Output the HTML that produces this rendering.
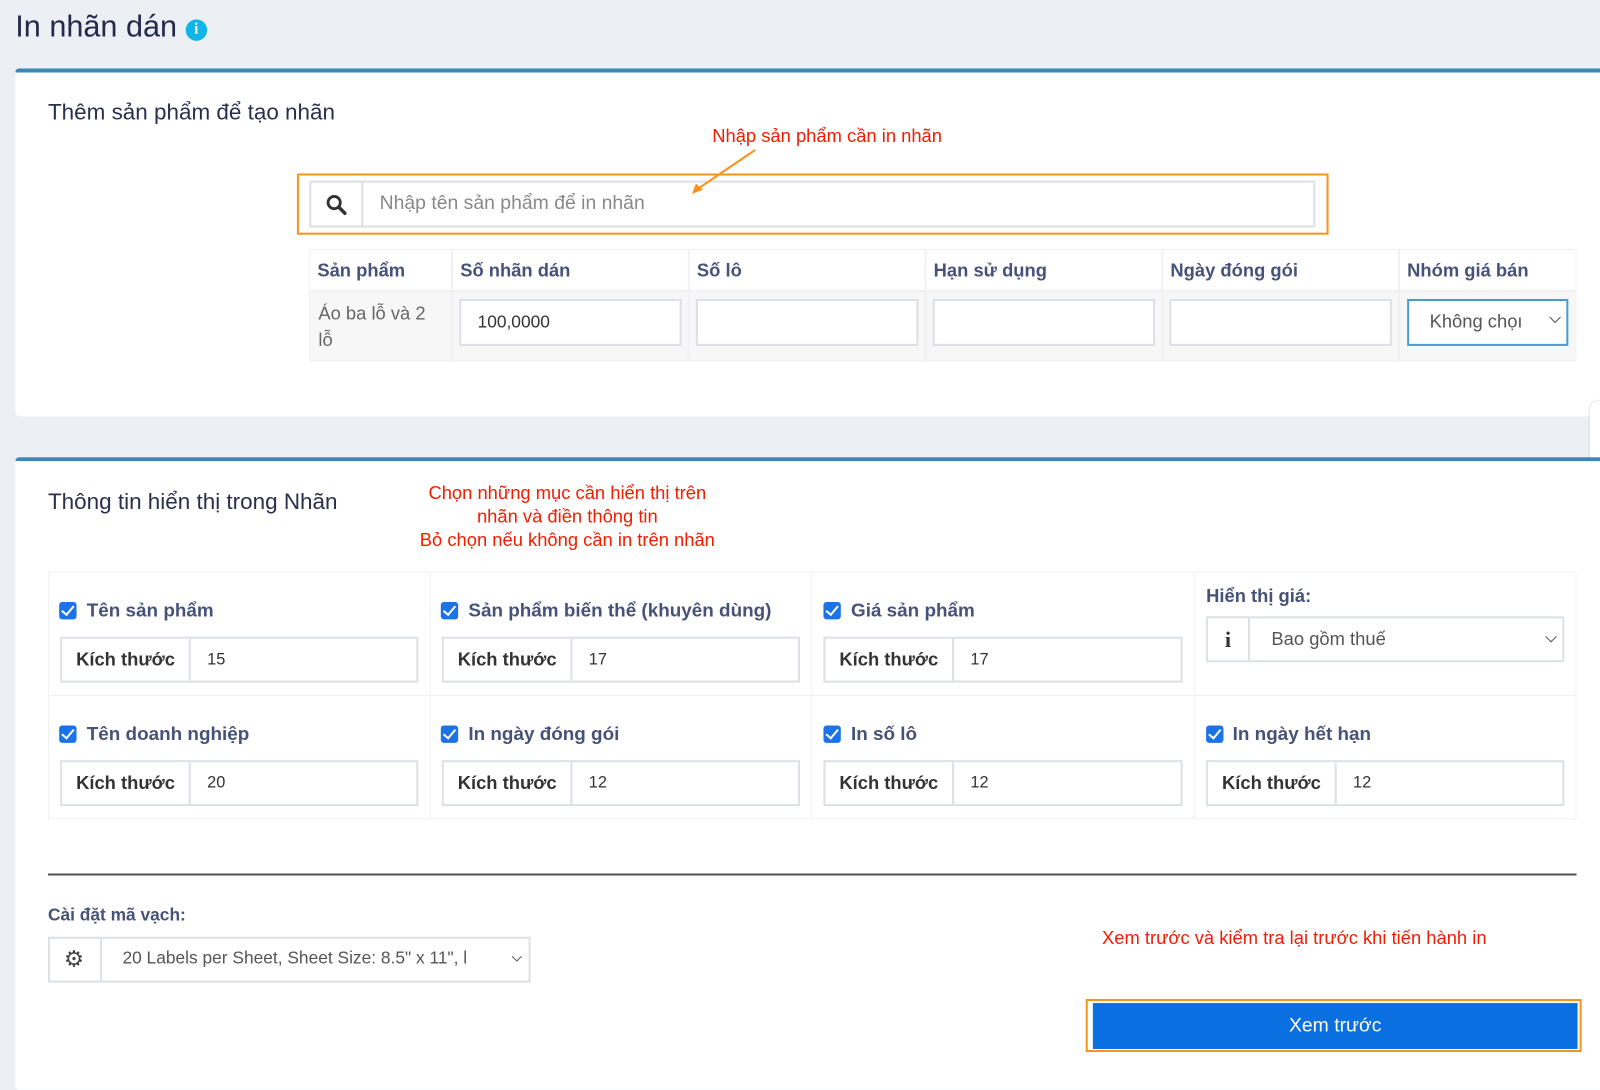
<!DOCTYPE html>
<html><head><meta charset="utf-8"><style>
*{box-sizing:border-box;margin:0;padding:0}
body{width:1600px;height:1060px;background:#eceff4;font-family:"Liberation Sans",sans-serif;overflow:hidden;color:#333}
#w{position:absolute;left:0;top:0;width:1568px;height:1040px;transform:scale(1.0204);transform-origin:0 0}
.a{position:absolute}
.card{position:absolute;background:#fff;border-top:4px solid #3a87b9;border-radius:4px 0 0 4px}
h1{position:absolute;left:15px;top:10px;font-size:30px;font-weight:normal;color:#252a4a}
.h2{font-size:22px;color:#2a2f4d}
.red{color:#f41c00;font-size:18px;text-align:center;line-height:23px}
.th{position:absolute;top:244px;height:41px;background:#fff;border:1px solid #f0f0f2;font-size:18px;font-weight:bold;color:#46527a;padding:10px 7px}
.td{position:absolute;top:285px;height:69px;background:#f7f7f8;border:1px solid #f0f0f2}
.inp{position:absolute;background:#fff;border:2px solid #dde0e6;font-size:17px;color:#333;padding:11px 16px}
.cell{position:absolute;border:1px solid #f0f1f3;background:#fff}
.chk{position:absolute;width:17px;height:17px;background:#1a73e8;border-radius:3px}
.chk:after{content:"";position:absolute;left:5px;top:1px;width:5px;height:10px;border:solid #fff;border-width:0 2.5px 2.5px 0;transform:rotate(40deg)}
.lbl{position:absolute;font-size:18.5px;font-weight:bold;color:#46527a}
.grp{position:absolute;height:45px;border:2px solid #dde0e6;background:#fff}
.grp .k{position:absolute;left:0;top:0;bottom:0;width:126px;border-right:2px solid #dde0e6;font-size:18px;font-weight:bold;color:#333;text-align:center;line-height:41px;background:#fff}
.grp .v{position:absolute;left:142px;top:12px;font-size:16px;color:#333}
</style></head><body><div id="w">
<h1>In nhãn dán <span style="display:inline-block;width:21px;height:21px;border-radius:50%;background:#12b5e8;color:#fff;font-size:15px;font-weight:bold;text-align:center;line-height:21px;vertical-align:3px;font-family:'Liberation Serif',serif">i</span></h1>

<div class="card" style="left:15px;top:67px;width:1585px;height:341px"></div>
<div class="a" style="left:1558px;top:393px;width:42px;height:60px;background:#fff;border-radius:8px 0 0 8px;box-shadow:0 0 2px #ccc"></div>
<div class="a h2" style="left:47px;top:97px">Thêm sản phẩm để tạo nhãn</div>
<div class="a red" style="left:698px;top:122px">Nhập sản phẩm cần in nhãn</div>

<div class="a" style="left:291px;top:170px;width:1011px;height:60px;border:2px solid #f7941d"></div>
<div class="a" style="left:303px;top:177px;width:986px;height:46px;border:2px solid #dde0e6;background:#fff"></div>
<div class="a" style="left:303px;top:177px;width:53px;height:46px;border-right:2px solid #dde0e6"></div>
<svg class="a" style="left:319px;top:190px" width="22" height="22" viewBox="0 0 22 22"><circle cx="8.5" cy="8.5" r="6" fill="none" stroke="#333" stroke-width="2.8"/><path d="M13 13l6 6" stroke="#333" stroke-width="3.4" stroke-linecap="round"/></svg>
<div class="a" style="left:372px;top:189px;font-size:19px;color:#888">Nhập tên sản phẩm để in nhãn</div>
<svg class="a" style="left:0;top:0" width="1600" height="1060"><g stroke="#f7941d" stroke-width="2" fill="#f7941d">
<line x1="740" y1="147" x2="684" y2="185"/><polygon points="678,190 682,180 689,186" stroke="none"/>
<line x1="426" y1="537" x2="88" y2="584"/><polygon points="80,585 90,579 91,588" stroke="none"/>
<line x1="428" y1="542" x2="264" y2="631"/><polygon points="257,635 264,627 268,634" stroke="none"/>
<line x1="1270" y1="928" x2="1244" y2="972"/><polygon points="1240,979 1241,968 1248,972" stroke="none"/>
</g></svg>

<div class="th" style="left:303px;width:140px">Sản phẩm</div>
<div class="th" style="left:443px;width:232px">Số nhãn dán</div>
<div class="th" style="left:675px;width:232px">Số lô</div>
<div class="th" style="left:907px;width:232px">Hạn sử dụng</div>
<div class="th" style="left:1139px;width:232px">Ngày đóng gói</div>
<div class="th" style="left:1371px;width:174px">Nhóm giá bán</div>
<div class="td" style="left:303px;width:140px;font-size:18px;color:#666;padding:8px 24px 8px 8px;line-height:26px">Áo ba lỗ và 2 lỗ</div>
<div class="td" style="left:443px;width:232px"></div>
<div class="td" style="left:675px;width:232px"></div>
<div class="td" style="left:907px;width:232px"></div>
<div class="td" style="left:1139px;width:232px"></div>
<div class="td" style="left:1371px;width:174px"></div>
<div class="inp" style="left:450px;top:293px;width:218px;height:46px">100,0000</div>
<div class="inp" style="left:682px;top:293px;width:218px;height:46px"></div>
<div class="inp" style="left:914px;top:293px;width:218px;height:46px"></div>
<div class="inp" style="left:1146px;top:293px;width:218px;height:46px"></div>
<div class="inp" style="left:1379px;top:293px;width:158px;height:46px;border-color:#4a9bd0;color:#555;padding:10px 20px;font-size:18px">Không chọı</div>
<div class="a" style="left:1520px;top:307px;width:8px;height:8px;border:solid #555;border-width:0 1.5px 1.5px 0;transform:rotate(45deg)"></div>

<div class="card" style="left:15px;top:448px;width:1585px;height:620px"></div>
<div class="a h2" style="left:47px;top:479px">Thông tin hiển thị trong Nhãn</div>
<div class="a red" style="left:400px;top:472px;width:312px">Chọn những mục cần hiển thị trên nhãn và điền thông tin<br>Bỏ chọn nếu không cần in trên nhãn</div>

<div class="cell" style="left:47px;top:560px;width:375px;height:122px"></div>
<div class="cell" style="left:421px;top:560px;width:375px;height:122px"></div>
<div class="cell" style="left:795px;top:560px;width:376px;height:122px"></div>
<div class="cell" style="left:1170px;top:560px;width:375px;height:122px"></div>
<div class="cell" style="left:47px;top:681px;width:375px;height:122px"></div>
<div class="cell" style="left:421px;top:681px;width:375px;height:122px"></div>
<div class="cell" style="left:795px;top:681px;width:376px;height:122px"></div>
<div class="cell" style="left:1170px;top:681px;width:375px;height:122px"></div>

<div class="chk" style="left:58px;top:590px"></div><div class="lbl" style="left:85px;top:587px">Tên sản phẩm</div>
<div class="chk" style="left:432px;top:590px"></div><div class="lbl" style="left:459px;top:587px">Sản phẩm biến thể (khuyên dùng)</div>
<div class="chk" style="left:807px;top:590px"></div><div class="lbl" style="left:834px;top:587px">Giá sản phẩm</div>
<div class="lbl" style="left:1182px;top:574px;font-size:18px">Hiển thị giá:</div>
<div class="chk" style="left:58px;top:711px"></div><div class="lbl" style="left:85px;top:708px">Tên doanh nghiệp</div>
<div class="chk" style="left:432px;top:711px"></div><div class="lbl" style="left:459px;top:708px">In ngày đóng gói</div>
<div class="chk" style="left:807px;top:711px"></div><div class="lbl" style="left:834px;top:708px">In số lô</div>
<div class="chk" style="left:1182px;top:711px"></div><div class="lbl" style="left:1208px;top:708px">In ngày hết hạn</div>

<div class="grp" style="left:59px;top:624px;width:351px"><div class="k">Kích thước</div><div class="v">15</div></div>
<div class="grp" style="left:433px;top:624px;width:351px"><div class="k">Kích thước</div><div class="v">17</div></div>
<div class="grp" style="left:807px;top:624px;width:352px"><div class="k">Kích thước</div><div class="v">17</div></div>
<div class="grp" style="left:59px;top:745px;width:351px"><div class="k">Kích thước</div><div class="v">20</div></div>
<div class="grp" style="left:433px;top:745px;width:351px"><div class="k">Kích thước</div><div class="v">12</div></div>
<div class="grp" style="left:807px;top:745px;width:352px"><div class="k">Kích thước</div><div class="v">12</div></div>
<div class="grp" style="left:1182px;top:745px;width:351px"><div class="k">Kích thước</div><div class="v">12</div></div>

<div class="grp" style="left:1182px;top:604px;width:351px"><div class="k" style="width:41px;font-family:'Liberation Serif',serif;font-size:22px">i</div><div class="v" style="left:62px;top:10px;font-size:18px;color:#555">Bao gồm thuế</div></div>
<div class="a" style="left:1516px;top:620px;width:8px;height:8px;border:solid #555;border-width:0 1.5px 1.5px 0;transform:rotate(45deg)"></div>

<div class="a" style="left:47px;top:856px;width:1498px;height:2px;background:#555"></div>
<div class="lbl" style="left:47px;top:887px;font-size:17px">Cài đặt mã vạch:</div>
<div class="a" style="left:47px;top:918px;width:473px;height:45px;border:2px solid #dde0e6;background:#fff"></div>
<div class="a" style="left:47px;top:918px;width:53px;height:45px;border-right:2px solid #dde0e6;text-align:center;line-height:43px;font-size:22px;color:#444">⚙</div>
<div class="a" style="left:120px;top:929px;font-size:17px;color:#555">20 Labels per Sheet, Sheet Size: 8.5" x 11", l</div>
<div class="a" style="left:503px;top:934px;width:7px;height:7px;border:solid #555;border-width:0 1.5px 1.5px 0;transform:rotate(45deg)"></div>

<div class="a red" style="left:1080px;top:908px">Xem trước và kiểm tra lại trước khi tiến hành in</div>
<div class="a" style="left:1064px;top:979px;width:486px;height:52px;border:2px solid #f7941d"></div>
<div class="a" style="left:1071px;top:983px;width:475px;height:45px;background:#0a6fe0;color:#fff;font-size:19px;text-align:center;line-height:45px">Xem trước</div>
</div></body></html>
